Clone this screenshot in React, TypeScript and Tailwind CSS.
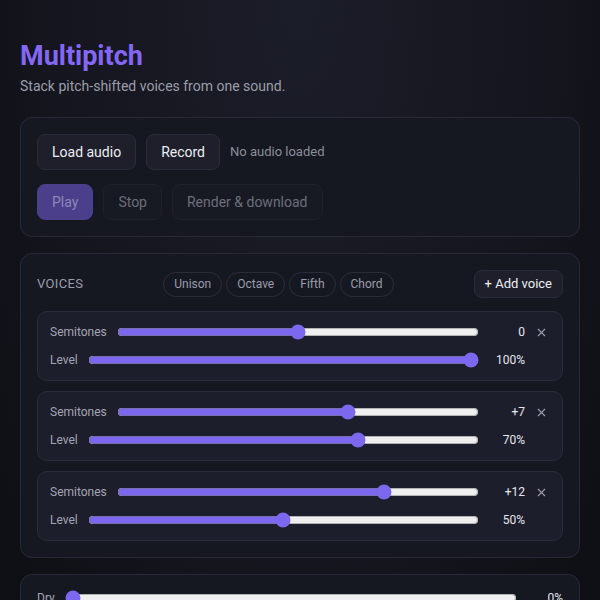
import { X } from "lucide-react";

type Voice = { semis: number; level: number };

const VOICES: Voice[] = [
  { semis: 0, level: 100 },
  { semis: 7, level: 70 },
  { semis: 12, level: 50 },
];

const PRESETS = ["Unison", "Octave", "Fifth", "Chord"];

function fmtSemis(n: number) {
  return n > 0 ? `+${n}` : `${n}`;
}

function Slider({ value, min, max }: { value: number; min: number; max: number }) {
  return (
    <input
      type="range"
      min={min}
      max={max}
      defaultValue={value}
      className="m-0 h-4 min-w-0 flex-1 accent-[#7b68ee] [color-scheme:light]"
    />
  );
}

function VoiceRow({ voice }: { voice: Voice }) {
  return (
    <div className="flex flex-col gap-2 rounded-[10px] border border-[#2b2d3c] bg-[#1d1e2b] px-3 py-2.5">
      <div className="flex h-5 items-center">
        <span className="mr-2.5 text-[12px] text-[#a3a5b3]">Semitones</span>
        <Slider value={voice.semis} min={-24} max={24} />
        <span className="ml-2.5 w-[36px] text-right text-[12px] text-[#e6e7ee]">{fmtSemis(voice.semis)}</span>
        <button className="ml-[7px] grid w-[18px] place-items-center text-[#9a9cab]">
          <X size={13} strokeWidth={2} />
        </button>
      </div>
      <div className="flex h-5 items-center">
        <span className="mr-2.5 text-[12px] text-[#a3a5b3]">Level</span>
        <Slider value={voice.level} min={0} max={100} />
        <span className="ml-2.5 w-[36px] text-right text-[12px] text-[#e6e7ee]">{voice.level}%</span>
        <span className="ml-[7px] w-[18px]" />
      </div>
    </div>
  );
}

const btn = "rounded-lg border px-[14px] py-[7px] text-[14px] leading-5";

export default function App() {
  return (
    <div className="min-h-screen bg-[radial-gradient(ellipse_at_top,#1b1d29_0%,#14151d_60%,#0d0e12_100%)] px-5 pb-10 pt-10 font-['Roboto',sans-serif]">
      <h1 className="text-[27px] font-bold leading-8 text-[#8467f5]">Multipitch</h1>
      <p className="mt-1 text-[14px] leading-5 text-[#9b9daa]">Stack pitch-shifted voices from one sound.</p>

      <div className="mt-[21px] flex flex-col gap-4">
        {/* transport */}
        <section className="rounded-xl border border-[#272a36] bg-[#161821] p-4">
          <div className="flex items-center gap-2.5">
            <button className={`${btn} border-[#2a2c3a] bg-[#1e1f2b] text-[#eceef4]`}>Load audio</button>
            <button className={`${btn} border-[#2a2c3a] bg-[#1e1f2b] text-[#eceef4]`}>Record</button>
            <span className="text-[13px] text-[#8b8d99]">No audio loaded</span>
          </div>
          <div className="mt-[14px] flex items-center gap-2.5">
            <button disabled className={`${btn} border-[#4b3f8c] bg-[#4b3f8c] text-[#8d87b4]`}>
              Play
            </button>
            <button disabled className={`${btn} border-[#1f2029] bg-[#181a23] text-[#6c6e7b]`}>
              Stop
            </button>
            <button disabled className={`${btn} border-[#1f2029] bg-[#181a23] text-[#6c6e7b]`}>
              Render &amp; download
            </button>
          </div>
        </section>

        {/* voices */}
        <section className="rounded-xl border border-[#272a36] bg-[#161821] p-4">
          <div className="flex h-7 items-center justify-between">
            <span className="text-[13px] tracking-wide text-[#9a9cab]">VOICES</span>
            <div className="flex items-center gap-1">
              {PRESETS.map((p) => (
                <button
                  key={p}
                  className="h-[25px] rounded-full border border-[#2a2c38] px-[10px] text-[12px] text-[#9a9cab]"
                >
                  {p}
                </button>
              ))}
            </div>
            <button className="h-7 rounded-lg border border-[#2a2c3a] bg-[#1e1f2b] px-[10px] text-[13px] text-[#eceef4]">
              + Add voice
            </button>
          </div>
          <div className="mt-[13px] flex flex-col gap-2.5">
            {VOICES.map((v, i) => (
              <VoiceRow key={i} voice={v} />
            ))}
          </div>
        </section>

        {/* mix */}
        <section className="flex flex-col gap-3 rounded-xl border border-[#272a36] bg-[#161821] px-4 pb-4 pt-[13px]">
          <div className="flex h-5 items-center">
            <span className="mr-2.5 text-[12px] text-[#a3a5b3]">Dry</span>
            <Slider value={0} min={0} max={100} />
            <span className="ml-2.5 w-[36px] text-right text-[12px] text-[#e6e7ee]">0%</span>
          </div>
          <div className="flex h-5 items-center">
            <span className="mr-2.5 text-[12px] text-[#a3a5b3]">Wet</span>
            <Slider value={100} min={0} max={100} />
            <span className="ml-2.5 w-[36px] text-right text-[12px] text-[#e6e7ee]">100%</span>
          </div>
        </section>
      </div>
    </div>
  );
}
